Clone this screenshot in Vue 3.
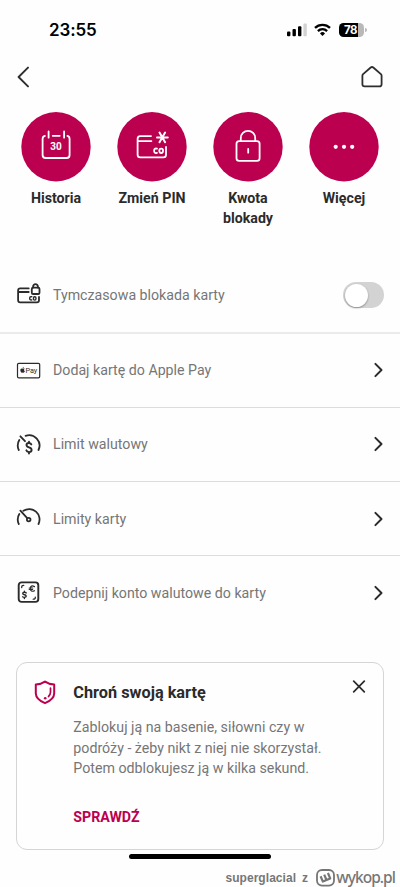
<script setup>
const actions = [
  { id: 'history', label: 'Historia' },
  { id: 'pin', label: 'Zmień PIN' },
  { id: 'lock', label: 'Kwota blokady' },
  { id: 'more', label: 'Więcej' },
]
const rows = [
  { id: 'block', label: 'Tymczasowa blokada karty', toggle: true },
  { id: 'pay', label: 'Dodaj kartę do Apple Pay' },
  { id: 'currency', label: 'Limit walutowy' },
  { id: 'limits', label: 'Limity karty' },
  { id: 'account', label: 'Podepnij konto walutowe do karty' },
]
</script>

<template>
  <main class="screen">
    <header class="status">
      <span class="time">23:55</span>
      <div class="indicators">
        <svg class="signal" width="20" height="14" viewBox="0 0 20 14">
          <rect x="0" y="8.6" width="3.4" height="4.6" rx="1" />
          <rect x="5.5" y="6" width="3.4" height="7.2" rx="1" />
          <rect x="11" y="3.2" width="3.4" height="10" rx="1" />
          <rect x="16.4" y="0.4" width="3.4" height="12.8" rx="1" fill="#d2d2d2" />
        </svg>
        <svg class="wifi" width="17" height="14" viewBox="0 0 17 14" fill="none" stroke="#000" stroke-width="2.3">
          <path d="M1 4.9a10.6 10.6 0 0 1 15 0" />
          <path d="M3.9 8.1a6.5 6.5 0 0 1 9.2 0" />
          <path d="M8.5 13 6 10.4a3.5 3.5 0 0 1 5 0z" fill="#000" stroke="none" />
        </svg>
        <div class="battery"><span>78</span></div>
        <i class="nub"></i>
      </div>
    </header>

    <nav class="nav">
      <svg width="12" height="22" viewBox="0 0 12 22" fill="none" stroke="#2e2e2e" stroke-width="1.9" stroke-linecap="round" stroke-linejoin="round">
        <path d="M11 1.6 1.6 11 11 20.4" />
      </svg>
      <svg width="22" height="22" viewBox="0 0 22 22" fill="none" stroke="#2e2e2e" stroke-width="1.8" stroke-linejoin="round">
        <path d="M1.4 9.7Q1.4 8.8 2.1 8.1L9.7 1.5Q11 .5 12.3 1.5L19.9 8.1Q20.6 8.8 20.6 9.7V18.2Q20.6 20.4 18.4 20.4H3.6Q1.4 20.4 1.4 18.2Z" />
      </svg>
    </nav>

    <section class="actions">
      <div v-for="a in actions" :key="a.id" class="action">
        <svg class="disc" width="70" height="70" viewBox="0 0 70 70" fill="none" stroke="#fff" stroke-width="1.8" stroke-linecap="round" stroke-linejoin="round">
          <circle cx="35" cy="34.8" r="34.7" fill="#bb004f" stroke="none" />
          <template v-if="a.id === 'history'">
            <path d="M23.9 23.9Q21.6 24.4 21.6 27V43Q21.6 46 24.6 46H45.6Q48.6 46 48.6 43V27Q48.6 24.4 46.4 23.9M31.7 23.8H38.7M27.6 19.5V25.7M43.1 19.5V25.7" />
            <text x="35.1" y="38.4" class="day">30</text>
          </template>
          <template v-else-if="a.id === 'pin'">
            <path d="M34 24.1H23.2Q20.6 24.1 20.6 26.7V42.8Q20.6 45.4 23.2 45.4H46.4Q49 45.4 49 42.8V35M21 29.1H34.4" />
            <path d="M40 25.4H50.8M42.5 20.6 48.1 30.2M48.1 20.6 42.5 30.2" stroke-width="2" />
            <path d="M40 36.7Q37.3 35.8 37.1 38.8Q37.3 41.8 40 40.9" />
            <ellipse cx="44.2" cy="38.8" rx="1.9" ry="2.2" />
          </template>
          <template v-else-if="a.id === 'lock'">
            <rect x="23.5" y="29.1" width="23.1" height="19.8" rx="2.6" />
            <path d="M27.8 29V26A7.2 7.2 0 0 1 42.2 26V29" />
            <path d="M35.2 37V40.7" />
          </template>
          <g v-else fill="#fff" stroke="none">
            <circle cx="26.7" cy="34.8" r="2.1" />
            <circle cx="35" cy="34.8" r="2.1" />
            <circle cx="43.2" cy="34.8" r="2.1" />
          </g>
        </svg>
        <span class="action-label">{{ a.label }}</span>
      </div>
    </section>

    <section class="rows">
      <div v-for="r in rows" :key="r.id" class="row">
        <svg class="row-icon" width="25" height="25" viewBox="0 0 25 25" fill="none" stroke="#2b2b2b" stroke-width="1.8" stroke-linecap="round" stroke-linejoin="round">
          <template v-if="r.id === 'block'">
            <path d="M12.7 5.4H4.2Q2.1 5.4 2.1 7.5V17.2Q2.1 19.3 4.2 19.3H20.9Q23 19.3 23 17.2V14M2.5 9H12.7" />
            <rect x="15.8" y="4.6" width="7.7" height="6.4" rx="1.3" />
            <path d="M17.1 4.6V3.6A2.4 2.4 0 0 1 21.9 3.6V4.6" />
            <path d="M15.8 13.7Q13.8 13.2 13.7 15.4Q13.8 17.4 15.8 16.9" stroke-width="1.4" />
            <ellipse cx="18.7" cy="15.4" rx="1.3" ry="1.7" stroke-width="1.4" />
          </template>
          <template v-else-if="r.id === 'pay'">
            <rect x="1.5" y="5.3" width="22.2" height="14.5" rx="1.3" stroke-width="1.2" />
            <path d="M6.8 10.7C5.1 9.9 4 11.2 4.4 12.8C4.8 14.6 5.6 15 6.7 14.5C7.7 15 8.5 14.4 8.9 13.3C7.8 12.8 7.8 11.4 8.7 10.8C8.1 10.2 7.3 10.5 6.8 10.7ZM6.6 10.2Q6.7 8.9 7.9 8.8Q7.8 10 6.6 10.2Z" fill="#2b2b2b" stroke="none" />
            <text x="9.4" y="14.8" class="pay">Pay</text>
          </template>
          <template v-else-if="r.id === 'currency'">
            <path d="M9.6 3.8A10.4 10.4 0 0 1 22.5 18M2.8 18A10.7 10.7 0 0 1 3.3 8M4.4 4.3 9 9.2" />
            <path d="M15.3 12.4Q14.7 11 12.9 11Q10.5 11 10.5 13Q10.5 14.6 13 15.3Q15.6 16 15.6 18Q15.6 20.1 13.1 20.1Q10.8 20.1 10.3 18.3M13 9.8V11M13 20.1V21.5" stroke-width="1.9" />
          </template>
          <template v-else-if="r.id === 'limits'">
            <path d="M7.4 4.8A10.4 10.4 0 0 1 22.5 18M2.8 18A10.7 10.7 0 0 1 3.3 8M4.4 4.6 11.2 12.1" />
            <circle cx="12.7" cy="13.6" r="1.8" />
          </template>
          <template v-else>
            <rect x="2.7" y="2.4" width="19.6" height="19.5" rx="2.8" stroke-width="1.9" />
            <path d="M5.7 7.5Q5.6 5.2 7.8 5.3M19.3 17.2Q19.4 19.3 17.2 19.2" stroke-width="1.3" />
            <path d="M18.5 6.6Q14.7 4.6 14.2 8.7Q14.7 12.4 18.5 10.7M13.2 8H16.8M13.2 9.5H16.6" stroke-width="1.2" />
            <path d="M10.2 12.9Q8.4 11.7 6.9 12.9Q6.3 14.4 8.4 14.8Q10.6 15.2 10 16.8Q8.4 18.1 6.6 16.8M8.4 11.2V12.3M8.4 17.4V18.6" stroke-width="1.4" />
          </template>
        </svg>
        <span class="row-label">{{ r.label }}</span>
        <span v-if="r.toggle" class="toggle"><i></i></span>
        <svg v-else class="chevron" width="11" height="16" viewBox="0 0 11 16" fill="none" stroke="#2b2b2b" stroke-width="2" stroke-linecap="round" stroke-linejoin="round">
          <path d="M2.4 1.9 8.5 8 2.4 14.1" />
        </svg>
      </div>
    </section>

    <article class="card">
      <svg class="shield" width="22" height="25" viewBox="0 0 22 25" fill="none" stroke="#bb004f" stroke-width="2" stroke-linecap="round" stroke-linejoin="round">
        <path d="M11 1.6Q15 4.3 20.2 4.4V13.5Q20 19.5 11 23.2Q2 19.5 1.8 13.5V4.4Q7 4.3 11 1.6Z" />
        <path d="M16.5 8.2V12.2Q16.4 14.8 14.5 16.5" stroke-width="1.7" />
        <circle cx="11.2" cy="18.3" r="1.3" fill="#bb004f" stroke="none" />
      </svg>
      <div class="card-body">
        <h2>Chroń swoją kartę</h2>
        <p>Zablokuj ją na basenie, siłowni czy w<br />podróży - żeby nikt z niej nie skorzystał.<br />Potem odblokujesz ją w kilka sekund.</p>
        <a>SPRAWDŹ</a>
      </div>
      <svg class="close" width="14" height="14" viewBox="0 0 14 14" stroke="#2b2b2b" stroke-width="1.7" stroke-linecap="round">
        <path d="M1.7 1.2 12.3 11.8M12.3 1.2 1.7 11.8" />
      </svg>
    </article>

    <div class="home-bar"></div>

    <footer class="credit">
      <span class="author">superglacial</span>
      <span class="author from">z</span>
      <svg width="19" height="18" viewBox="0 0 19 18" fill="none" stroke="#767676" stroke-linejoin="round">
        <rect x="1" y="1" width="17" height="15.6" rx="5" stroke-width="1.8" />
        <path d="M4.6 7.2 6.9 12.6 14.2 9.4 11.9 4M8.2 5.6 10.4 10.8" stroke-width="2.2" />
      </svg>
      <span class="brand">wykop.pl</span>
    </footer>
  </main>
</template>

<style>
body {
  background: #fff;
}
</style>

<style scoped>
.screen {
  width: 400px;
  height: 887px;
  overflow: hidden;
  box-sizing: border-box;
  display: flex;
  flex-direction: column;
  background: #fefefe;
  font-family: Roboto, sans-serif;
  color: #2b2b2b;
}
.status {
  flex: none;
  height: 60px;
  display: flex;
  align-items: center;
  justify-content: space-between;
  padding: 0 33px 0 49px;
}
.time {
  font: 600 17px Inter, sans-serif;
  letter-spacing: -0.1px;
  color: #000;
}
.indicators {
  display: flex;
  align-items: center;
}
.wifi {
  margin: 0 8px 0 7px;
}
.battery {
  width: 25px;
  height: 14px;
  box-sizing: border-box;
  padding-right: 2px;
  border-radius: 4.5px;
  background: linear-gradient(90deg, #000 78%, #b9b9b9 78%);
  color: #fff;
  font: 700 11.5px/14px Inter, sans-serif;
  letter-spacing: -0.4px;
  text-align: center;
}
.nub {
  width: 2px;
  height: 4px;
  margin-left: 1px;
  border-radius: 0 2px 2px 0;
  background: #b9b9b9;
}
.nav {
  flex: none;
  height: 34px;
  display: flex;
  align-items: center;
  justify-content: space-between;
  padding: 0 17.5px 0 16.5px;
}
.actions {
  flex: none;
  height: 147.25px;
  display: grid;
  grid-template-columns: repeat(4, 96px);
  justify-content: center;
  margin-top: 18px;
}
.action {
  display: flex;
  flex-direction: column;
  align-items: center;
  gap: 5.5px;
}
.disc {
  flex: none;
}
.day {
  fill: #fff;
  stroke: none;
  font: 700 10px Roboto, sans-serif;
  text-anchor: middle;
}
.action-label {
  width: 78px;
  font-size: 14.2px;
  line-height: 20.5px;
  font-weight: 700;
  text-align: center;
}
.rows {
  flex: none;
}
.row {
  height: 74.25px;
  box-sizing: border-box;
  display: flex;
  align-items: center;
  padding: 0 16px;
  border-bottom: 1px solid #dcdcdc;
}
.row:first-child {
  border-bottom: 2px solid #ebebeb;
}
.row:last-child {
  border-bottom-color: transparent;
}
.row-label {
  flex: 1;
  margin-left: 12px;
  font-size: 14.2px;
  color: #767676;
}
.pay {
  fill: #2b2b2b;
  stroke: none;
  font: 400 7.2px Roboto, sans-serif;
}
.toggle {
  width: 41px;
  height: 26px;
  box-sizing: border-box;
  padding: 1.5px;
  border-radius: 13px;
  background: #d3d3d3;
}
.toggle i {
  display: block;
  width: 23px;
  height: 23px;
  border-radius: 50%;
  background: #fff;
  box-shadow: 0 1px 2px rgba(0, 0, 0, 0.35);
}
.card {
  flex: none;
  height: 188px;
  box-sizing: border-box;
  display: flex;
  align-items: flex-start;
  margin: 31.5px 16px 0;
  padding: 17px;
  border: 1px solid #d5d5d5;
  border-radius: 11px;
}
.card-body {
  flex: 1;
  margin-left: 17.3px;
}
h2 {
  margin: 0;
  font-size: 16.3px;
  line-height: 25px;
  font-weight: 700;
}
p {
  margin: 12px 0 0;
  font-size: 14.22px;
  line-height: 20.5px;
  color: #767676;
  white-space: nowrap;
}
a {
  display: block;
  margin-top: 28px;
  font-size: 14.2px;
  line-height: 20px;
  font-weight: 700;
  color: #bb004f;
}
.close {
  flex: none;
}
.home-bar {
  flex: none;
  width: 142px;
  height: 5px;
  margin: 4px auto 0;
  border-radius: 3px;
  background: #000;
}
.credit {
  flex: none;
  height: 18px;
  display: flex;
  align-items: center;
  justify-content: flex-end;
  margin-top: 10px;
  padding-right: 5px;
  color: #767676;
}
.author {
  font: 700 12px/18px "Liberation Sans", sans-serif;
  letter-spacing: 0.05px;
}
.from {
  margin: 0 8px 0 6px;
}
.brand {
  margin-left: 1px;
  font: 500 15.5px/18px "Noto Sans", sans-serif;
  letter-spacing: -0.95px;
  margin-top: -3px;
}
</style>
